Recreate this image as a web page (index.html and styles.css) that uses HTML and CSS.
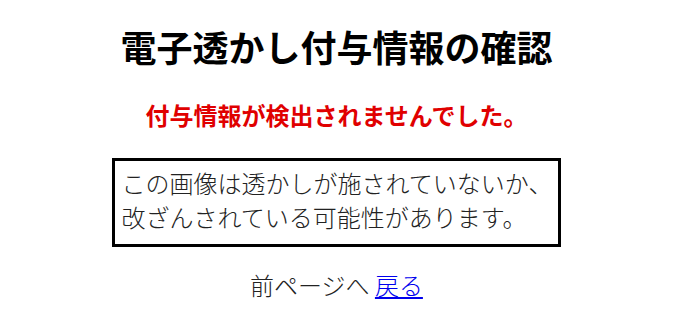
FILE: index.html
```html
<!DOCTYPE html>
<html lang="ja">
<head>
    <meta charset="UTF-8">
    <meta name="viewport" content="width=device-width, initial-scale=1.0">
    <title>電子透かし付与情報の確認</title>
    <link rel="stylesheet" href="styles.css">
</head>
<body>

    <h1 class="title">電子透かし付与情報の確認</h1>

    <p class="error">付与情報が検出されませんでした。</p>

    <div class="notice">
        この画像は透かしが施されていないか、<br>
        改ざんされている可能性があります。
    </div>

    <p class="back">前ページへ <a href="#">戻る</a></p>

</body>
</html>
```

FILE: styles.css
```css
body {
    font-family: "Noto Sans CJK JP", sans-serif;
    text-align: center;
    margin: 0;
    padding: 20px 8px 0 0;
    background-color: #fff;
    color: #000;
}

.title {
    font-size: 36px;
    font-weight: bold;
    line-height: 52px;
    margin: 0;
}

.error {
    color: #e00000;
    font-size: 24px;
    font-weight: bold;
    line-height: 34px;
    margin: 26px 0 0;
}

.notice {
    display: inline-block;
    text-align: left;
    margin-top: 26px;
    padding: 5px 6px 10px 7px;
    border: 3px solid #000;
    font-size: 24px;
    font-weight: 300;
    line-height: 34px;
    color: #222;
}

.back {
    font-size: 24px;
    font-weight: 300;
    line-height: 34px;
    margin: 21px 0 0;
    color: #222;
}

.back a {
    color: #0000ee;
}
```
